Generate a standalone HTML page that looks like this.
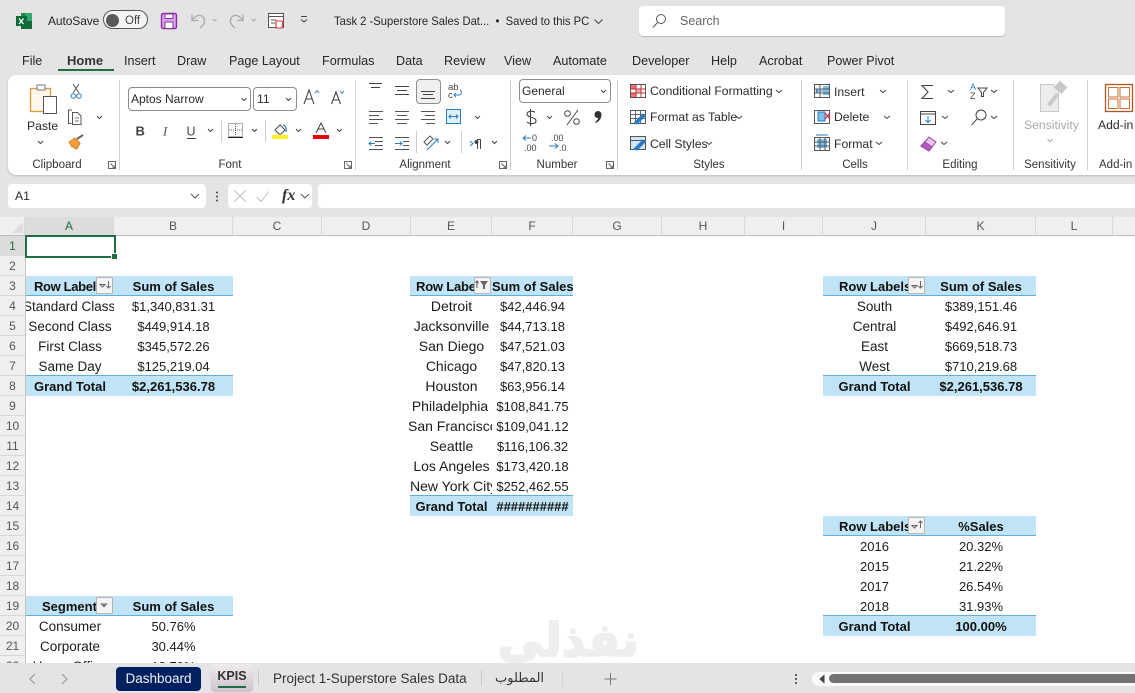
<!DOCTYPE html>
<html><head><meta charset="utf-8"><style>
html,body{margin:0;padding:0}
#p{position:relative;width:1135px;height:693px;overflow:hidden;background:#fff;font-family:"Liberation Sans",sans-serif;color:#222}
#p div,#p span.a{position:absolute;white-space:nowrap}
.bg{background:#e4e4e4}
.tt{font-size:12.6px;line-height:16px;color:#262626}
.rb{font-size:12.2px;line-height:16px;color:#2b2b2b}
.gl{font-size:11.5px;line-height:14px;color:#333;text-align:center;top:158px}
.sep{width:1px;top:80px;height:90px;background:#d0d0d0}
.ch{top:217px;height:18px;line-height:18px;font-size:12px;color:#555;text-align:center;background:#efefef;border-right:1px solid #d8d8d8;border-bottom:1px solid #bdbdbd}
.rh{left:0;width:25px;height:19px;line-height:21px;font-size:12px;color:#555;text-align:center;background:#efefef;border-bottom:1px solid #d8d8d8}
.cell{height:20px;line-height:21px;font-size:13px;text-align:center;overflow:hidden;color:#1c1c1c}
.l{font-size:13.5px}
.e{font-size:14px}
.b{font-weight:bold;color:#111}
.band{background:#c0e4f5}
.bt{background:#5eb1dc;height:1px}
.A{left:26px;width:88px}.B{left:114px;width:119px}
.E{left:411px;width:81px}.F{left:492px;width:81px}
.J{left:823px;width:103px}.K{left:926px;width:110px}
.btn{width:15px;height:15px;background:#f4f4f4;border:1px solid #b5b5b5;border-radius:1px}
</style></head><body><div id="p">

<div class="bg" style="left:0;top:0;width:1135px;height:217px"></div>
<div style="left:8px;top:75px;width:1135px;height:100px;background:#fff;border-radius:8px;box-shadow:0 1px 2px rgba(0,0,0,.18)"></div>

<!-- Title bar -->
<div class="tt" style="left:48px;top:13px;font-size:12px;letter-spacing:-.1px">AutoSave</div>
<div style="left:103px;top:10px;width:43px;height:17px;border:1px solid #555;border-radius:10px;background:#f4f4f4"></div>
<div style="left:106px;top:14px;width:13px;height:13px;border-radius:7px;background:#595959"></div>
<div class="tt" style="left:125px;top:13px;font-size:11.5px;color:#444">Off</div>
<div class="tt" style="left:334px;top:13px;font-size:12px;transform:scaleX(.935);transform-origin:0 50%">Task 2 -Superstore Sales Dat...&nbsp; •&nbsp; Saved to this PC</div>
<div style="left:639px;top:6px;width:366px;height:30px;background:#fff;border-radius:4px;box-shadow:0 1px 1px rgba(0,0,0,.2)"></div>
<div class="tt" style="left:680px;top:13px;color:#666;font-size:12.5px">Search</div>

<!-- Tabs -->
<div class="tt" style="left:22px;top:53px">File</div>
<div class="tt" style="left:67px;top:53px;font-weight:bold;font-size:13px;color:#333">Home</div>
<div style="left:58px;top:69px;width:56px;height:2px;background:#1f6e43"></div>
<div class="tt" style="left:124px;top:53px">Insert</div>
<div class="tt" style="left:177px;top:53px">Draw</div>
<div class="tt" style="left:229px;top:53px">Page Layout</div>
<div class="tt" style="left:322px;top:53px">Formulas</div>
<div class="tt" style="left:396px;top:53px">Data</div>
<div class="tt" style="left:444px;top:53px">Review</div>
<div class="tt" style="left:504px;top:53px">View</div>
<div class="tt" style="left:553px;top:53px">Automate</div>
<div class="tt" style="left:632px;top:53px">Developer</div>
<div class="tt" style="left:711px;top:53px">Help</div>
<div class="tt" style="left:759px;top:53px">Acrobat</div>
<div class="tt" style="left:827px;top:53px">Power Pivot</div>

<!-- Ribbon separators -->
<div class="sep" style="left:119px"></div><div class="sep" style="left:355px"></div>
<div class="sep" style="left:510px"></div><div class="sep" style="left:617px"></div>
<div class="sep" style="left:801px"></div><div class="sep" style="left:907px"></div>
<div class="sep" style="left:1013px"></div><div class="sep" style="left:1087px"></div>

<!-- Ribbon controls -->
<div class="rb" style="left:27px;top:118px">Paste</div>
<div style="left:128px;top:87px;width:121px;height:22px;border:1px solid #8d8d8d;border-radius:4px"></div>
<div class="rb" style="left:131px;top:91px;font-size:12px">Aptos Narrow</div>
<div style="left:253px;top:87px;width:42px;height:22px;border:1px solid #8d8d8d;border-radius:4px"></div>
<div class="rb" style="left:257px;top:91px">11</div>
<div style="left:416px;top:79px;width:23px;height:23px;background:#f0f0f0;border:1px solid #8d8d8d;border-radius:4px"></div>
<div style="left:519px;top:79px;width:90px;height:22px;border:1px solid #8d8d8d;border-radius:4px"></div>
<div class="rb" style="left:522px;top:83px;font-size:12px">General</div>
<div class="rb" style="left:650px;top:83px">Conditional Formatting</div>
<div class="rb" style="left:650px;top:109px">Format as Table</div>
<div class="rb" style="left:650px;top:136px">Cell Styles</div>
<div class="rb" style="left:834px;top:84px">Insert</div>
<div class="rb" style="left:834px;top:109px">Delete</div>
<div class="rb" style="left:834px;top:136px">Format</div>
<div class="rb" style="left:1024px;top:117px;color:#a9a9a9">Sensitivity</div>
<div class="rb" style="left:1098px;top:117px">Add-in</div>

<div class="gl" style="left:17px;width:80px">Clipboard</div>
<div class="gl" style="left:190px;width:80px">Font</div>
<div class="gl" style="left:385px;width:80px">Alignment</div>
<div class="gl" style="left:517px;width:80px">Number</div>
<div class="gl" style="left:669px;width:80px">Styles</div>
<div class="gl" style="left:815px;width:80px">Cells</div>
<div class="gl" style="left:920px;width:80px">Editing</div>
<div class="gl" style="left:1010px;width:80px">Sensitivity</div>
<div class="gl" style="left:1099px;width:36px;text-align:left">Add-in</div>

<!-- Formula bar -->
<div style="left:8px;top:184px;width:198px;height:24px;background:#fff;border-radius:4px"></div>
<div class="rb" style="left:15px;top:188px">A1</div>
<div style="left:228px;top:184px;width:84px;height:24px;background:#fff;border-radius:4px"></div>
<div style="left:318px;top:184px;width:830px;height:24px;background:#fff;border-radius:4px"></div>
<div style="left:282px;top:186px;font:italic bold 16px/20px 'Liberation Serif',serif;color:#333">fx</div>

<!-- Column headers -->
<div class="ch" style="left:0;width:24px"></div>
<div class="ch" style="left:25px;width:88px;background:#dcdcdc;color:#1f6e43;border-bottom:1px solid #1f6e43">A</div>
<div class="ch" style="left:114px;width:118px">B</div>
<div class="ch" style="left:233px;width:88px">C</div>
<div class="ch" style="left:322px;width:88px">D</div>
<div class="ch" style="left:411px;width:80px">E</div>
<div class="ch" style="left:492px;width:80px">F</div>
<div class="ch" style="left:573px;width:88px">G</div>
<div class="ch" style="left:662px;width:82px">H</div>
<div class="ch" style="left:745px;width:77px">I</div>
<div class="ch" style="left:823px;width:102px">J</div>
<div class="ch" style="left:926px;width:109px">K</div>
<div class="ch" style="left:1036px;width:76px">L</div>
<div class="ch" style="left:1113px;width:22px"></div>

<!-- Row headers -->
<div class="rh" style="top:236px;background:#dcdcdc;color:#1f6e43">1</div>
<div class="rh" style="top:256px">2</div><div class="rh" style="top:276px">3</div>
<div class="rh" style="top:296px">4</div><div class="rh" style="top:316px">5</div>
<div class="rh" style="top:336px">6</div><div class="rh" style="top:356px">7</div>
<div class="rh" style="top:376px">8</div><div class="rh" style="top:396px">9</div>
<div class="rh" style="top:416px">10</div><div class="rh" style="top:436px">11</div>
<div class="rh" style="top:456px">12</div><div class="rh" style="top:476px">13</div>
<div class="rh" style="top:496px">14</div><div class="rh" style="top:516px">15</div>
<div class="rh" style="top:536px">16</div><div class="rh" style="top:556px">17</div>
<div class="rh" style="top:576px">18</div><div class="rh" style="top:596px">19</div>
<div class="rh" style="top:616px">20</div><div class="rh" style="top:636px">21</div>
<div class="rh" style="top:656px">22</div>
<div style="left:25px;top:236px;width:1px;height:430px;background:#c4c4c4"></div>

<!-- Selection -->
<div style="left:25px;top:235px;width:87px;height:19px;border:2px solid #1f6e43"></div>
<div style="left:111px;top:253px;width:5px;height:5px;background:#1f6e43;border:1px solid #fff"></div>

<!-- Watermark -->
<div style="left:498px;top:612px;font:bold 46px/56px 'DejaVu Sans',sans-serif;color:#eeeeee;-webkit-text-stroke:2px #eeeeee">نفذلي</div>

<!-- Pivot 1 -->
<div class="band" style="left:26px;top:276px;width:207px;height:20px"></div>
<div class="bt" style="left:26px;top:295px;width:207px"></div>
<div class="cell b A" style="top:276px;text-align:left;padding-left:8px;width:70px;letter-spacing:-.35px">Row Labels</div>
<div class="cell b B" style="top:276px">Sum of Sales</div>
<div class="btn" style="left:96px;top:277px"></div>
<div class="cell l A" style="top:296px;text-align:left;text-indent:-3px">Standard Class</div><div class="cell B" style="top:296px">$1,340,831.31</div>
<div class="cell l A" style="top:316px">Second Class</div><div class="cell B" style="top:316px">$449,914.18</div>
<div class="cell l A" style="top:336px">First Class</div><div class="cell B" style="top:336px">$345,572.26</div>
<div class="cell l A" style="top:356px">Same Day</div><div class="cell B" style="top:356px">$125,219.04</div>
<div class="band" style="left:26px;top:376px;width:207px;height:20px"></div>
<div class="bt" style="left:26px;top:375px;width:207px"></div>
<div class="cell b A" style="top:376px">Grand Total</div><div class="cell b B" style="top:376px">$2,261,536.78</div>

<!-- Pivot 2 -->
<div class="band" style="left:410px;top:276px;width:163px;height:20px"></div>
<div class="bt" style="left:410px;top:295px;width:163px"></div>
<div class="cell b" style="left:416px;top:276px;width:60px;text-align:left;letter-spacing:-.2px">Row Labels</div>
<div class="btn" style="left:474px;top:277px"></div>
<div class="cell b F" style="top:276px">Sum of Sales</div>
<div class="cell e E" style="top:296px">Detroit</div><div class="cell F" style="top:296px">$42,446.94</div>
<div class="cell e E" style="top:316px">Jacksonville</div><div class="cell F" style="top:316px">$44,713.18</div>
<div class="cell e E" style="top:336px">San Diego</div><div class="cell F" style="top:336px">$47,521.03</div>
<div class="cell e E" style="top:356px">Chicago</div><div class="cell F" style="top:356px">$47,820.13</div>
<div class="cell e E" style="top:376px">Houston</div><div class="cell F" style="top:376px">$63,956.14</div>
<div class="cell e E" style="top:396px;left:408px;width:84px;text-align:center;text-indent:0">Philadelphia</div><div class="cell F" style="top:396px">$108,841.75</div>
<div class="cell e" style="left:408px;top:416px;width:84px;text-align:left">San Francisco</div><div class="cell F" style="top:416px">$109,041.12</div>
<div class="cell e E" style="top:436px">Seattle</div><div class="cell F" style="top:436px">$116,106.32</div>
<div class="cell e E" style="top:456px">Los Angeles</div><div class="cell F" style="top:456px">$173,420.18</div>
<div class="cell e" style="left:410px;top:476px;width:82px;text-align:left">New York City</div><div class="cell F" style="top:476px">$252,462.55</div>
<div class="band" style="left:410px;top:496px;width:163px;height:20px"></div>
<div class="bt" style="left:410px;top:495px;width:163px"></div>
<div class="cell b E" style="top:496px">Grand Total</div><div class="cell b F" style="top:496px">##########</div>

<!-- Pivot 3 -->
<div class="band" style="left:823px;top:276px;width:213px;height:20px"></div>
<div class="bt" style="left:823px;top:295px;width:213px"></div>
<div class="cell b" style="left:839px;top:276px;width:72px;text-align:left">Row Labels</div>
<div class="btn" style="left:908px;top:277px"></div>
<div class="cell b K" style="top:276px">Sum of Sales</div>
<div class="cell l J" style="top:296px">South</div><div class="cell K" style="top:296px">$389,151.46</div>
<div class="cell l J" style="top:316px">Central</div><div class="cell K" style="top:316px">$492,646.91</div>
<div class="cell l J" style="top:336px">East</div><div class="cell K" style="top:336px">$669,518.73</div>
<div class="cell l J" style="top:356px">West</div><div class="cell K" style="top:356px">$710,219.68</div>
<div class="band" style="left:823px;top:376px;width:213px;height:20px"></div>
<div class="bt" style="left:823px;top:375px;width:213px"></div>
<div class="cell b J" style="top:376px">Grand Total</div><div class="cell b K" style="top:376px">$2,261,536.78</div>

<!-- Pivot 4 -->
<div class="band" style="left:823px;top:516px;width:213px;height:20px"></div>
<div class="bt" style="left:823px;top:535px;width:213px"></div>
<div class="cell b" style="left:839px;top:516px;width:72px;text-align:left">Row Labels</div>
<div class="btn" style="left:908px;top:517px"></div>
<div class="cell b K" style="top:516px">%Sales</div>
<div class="cell J" style="top:536px">2016</div><div class="cell K" style="top:536px">20.32%</div>
<div class="cell J" style="top:556px">2015</div><div class="cell K" style="top:556px">21.22%</div>
<div class="cell J" style="top:576px">2017</div><div class="cell K" style="top:576px">26.54%</div>
<div class="cell J" style="top:596px">2018</div><div class="cell K" style="top:596px">31.93%</div>
<div class="band" style="left:823px;top:616px;width:213px;height:20px"></div>
<div class="bt" style="left:823px;top:615px;width:213px"></div>
<div class="cell b J" style="top:616px">Grand Total</div><div class="cell b K" style="top:616px">100.00%</div>

<!-- Pivot 5 -->
<div class="band" style="left:26px;top:596px;width:207px;height:20px"></div>
<div class="bt" style="left:26px;top:615px;width:207px"></div>
<div class="cell b" style="left:42px;top:596px;width:55px;text-align:left">Segment</div>
<div class="btn" style="left:96px;top:597px"></div>
<div class="cell b B" style="top:596px">Sum of Sales</div>
<div class="cell l A" style="top:616px">Consumer</div><div class="cell B" style="top:616px">50.76%</div>
<div class="cell l A" style="top:636px">Corporate</div><div class="cell B" style="top:636px">30.44%</div>
<div class="cell l A" style="top:656px">Home Office</div><div class="cell B" style="top:656px">18.79%</div>

<!-- Sheet tabs -->
<div style="left:0;top:663px;width:1135px;height:30px;background:#e4e4e6"></div>
<div style="left:116px;top:667px;width:85px;height:24px;background:#002060;border-radius:4px;color:#f2f2f2;font-size:13.5px;line-height:24px;text-align:center">Dashboard</div>
<div style="left:211px;top:664px;width:42px;height:27px;background:linear-gradient(#efecef,#cdc6cd);border-radius:4px;box-shadow:0 1px 1px rgba(0,0,0,.15);font-size:12.5px;font-weight:bold;line-height:25px;text-align:center;color:#333">KPIS</div>
<div style="left:218px;top:686px;width:28px;height:2px;background:#1f6e43"></div>
<div style="left:273px;top:671px;font-size:13.5px;line-height:16px;color:#333">Project 1-Superstore Sales Data</div>
<div style="left:258px;top:670px;width:1px;height:16px;background:#c9c9c9"></div>
<div style="left:481px;top:670px;width:1px;height:16px;background:#c9c9c9"></div>
<div style="left:562px;top:670px;width:1px;height:16px;background:#d2d2d2"></div>
<div style="left:495px;top:670px;font:13px/18px 'DejaVu Sans',sans-serif;color:#333">المطلوب</div>
<div style="left:812px;top:672px;width:330px;height:14px;background:#fafafa;border-radius:7px"></div>
<div style="left:829px;top:674px;width:310px;height:9px;background:#737373;border-radius:5px"></div>

<!-- Icons -->
<svg style="position:absolute;left:0;top:0" width="1135" height="693" viewBox="0 0 1135 693" fill="none" stroke="#444" stroke-width="1">
<!-- excel -->
<rect x="21" y="13" width="11" height="16" fill="#1d8a50" stroke="none"/><rect x="26" y="13" width="6" height="8" fill="#33a86c" stroke="none"/><rect x="21" y="21" width="11" height="8" fill="#136c3b" stroke="none"/>
<rect x="16" y="16" width="11" height="10" fill="#0f6a3a" stroke="none"/><path d="M19 18.500l4.500 5.500M23.500 18.500l-4.500 5.500" stroke="#fff" stroke-width="1.300"/>
<!-- save -->
<rect x="161.500" y="13.500" width="15" height="15" rx="1.500" fill="#d9a5e6" stroke="#8b2fa5" stroke-width="1.400"/><rect x="165" y="14" width="8" height="4.500" fill="#fff" stroke="#8b2fa5"/><rect x="165" y="22" width="8" height="6.500" fill="#fff" stroke="#8b2fa5"/>
<!-- undo/redo -->
<path d="M192 14.500v6h6M192.500 20c2-3 5-5 8-4.500 4 .8 5 6 3 9-1 1.300-2 2-3.500 3.500" stroke="#a8a8a8" stroke-width="1.300"/>
<path d="M243 14.500v6h-6M242.500 20c-2-3-5-5-8-4.500-4 .8-5 6-3 9 1 1.300 2 2 3.500 3.500" stroke="#a8a8a8" stroke-width="1.300"/>
<path d="M212.500 19l2 2 2-2M251.500 19l2 2 2-2" stroke="#aaa"/>
<!-- print preview -->
<rect x="268.500" y="13.500" width="15" height="14" stroke="#555" fill="#fff"/><path d="M268.500 16.500h15M271 20h5M271 23h4" stroke="#555"/><path d="M276 21h7l-1 7h-6z" fill="#fff" stroke="#d33" stroke-width="1.100"/>
<path d="M301 19.500l3 2.500 3-2.500M301 16.500h6" stroke="#444"/>
<!-- title chevron / search -->
<path d="M594.500 19.500l4 4 4-4" stroke="#444"/>
<circle cx="661" cy="19" r="4.500" stroke="#555"/><path d="M657.500 22.500l-4.500 5" stroke="#555"/>
<!-- paste -->
<rect x="30.500" y="88.500" width="20" height="23" fill="#fff7ea" stroke="#e09a38" stroke-width="1.300"/>
<rect x="37" y="85" width="8" height="5" fill="#fff" stroke="#777"/>
<rect x="43.500" y="96.500" width="13" height="17" fill="#fff" stroke="#555"/>
<path d="M38 141l2.500 2.500 2.500-2.500" stroke="#444"/>
<!-- scissors -->
<path d="M73 84l6 9M79 84l-6 9" stroke="#555"/><circle cx="73.500" cy="96" r="2.300" stroke="#2b7cc2"/><circle cx="79" cy="96" r="2.300" stroke="#2b7cc2"/>
<!-- copy -->
<path d="M72 110h-3.500v13.500h3M72.500 112.500h5l3.500 3.500v8.500h-8.500z" stroke="#555" fill="#fff"/><path d="M75 118h4M75 121h4" stroke="#777"/>
<path d="M97 116l2.500 2.500 2.500-2.500" stroke="#444"/>
<!-- brush -->
<path d="M69 142l6-4 5 5-3 6-3-1-1-2-1 1z" fill="#f0a040" stroke="#d97f20"/><path d="M77 139l6-4" stroke="#666" stroke-width="2"/>
<!-- font chev -->
<path d="M241.500 98l2.500 2.500 2.500-2.500M286 98l2.500 2.500 2.500-2.500" stroke="#444"/>
<!-- grow/shrink -->
<path d="M304 104l5-14 5 14M306 99h6" stroke="#444" stroke-width="1.100"/><path d="M315 93l2-2.500 2 2.500" stroke="#2b7cc2"/>
<path d="M331.500 104l4.500-12 4.500 12M333.500 100h5" stroke="#444" stroke-width="1.100"/><path d="M340 91l2 2.500 2-2.500" stroke="#2b7cc2"/>
<!-- launchers -->
<path d="M108.500 161.500h7v7h-7z M110.500 163.500l4 4M115 165v3h-3" stroke="#666"/>
<path d="M344.500 161.500h7v7h-7z M346.500 163.500l4 4M351 165v3h-3" stroke="#666"/>
<path d="M499.500 161.500h7v7h-7z M501.500 163.500l4 4M506 165v3h-3" stroke="#666"/>
<path d="M606.500 161.500h7v7h-7z M608.500 163.500l4 4M613 165v3h-3" stroke="#666"/>
<!-- B I U -->
<text x="135.500" y="135.500" font-size="13" font-weight="bold" fill="#444" stroke="none" font-family="Liberation Sans">B</text>
<text x="163" y="135.500" font-size="13" font-style="italic" fill="#555" stroke="none" font-family="Liberation Serif">I</text>
<text x="186.500" y="135.500" font-size="12.500" fill="#444" stroke="none" font-family="Liberation Sans">U</text><path d="M187 138.500h9" stroke="#444"/>
<path d="M208 129l2.500 2.500 2.500-2.500M252 129l2.500 2.500 2.500-2.500M296 129l2.500 2.500 2.500-2.500M337 129l2.500 2.500 2.500-2.500" stroke="#444"/>
<path d="M221.500 120v22M265.500 120v22" stroke="#ccc"/>
<rect x="228.500" y="123.500" width="14" height="13" stroke="#666" stroke-dasharray="1 1"/><path d="M235.500 124v12M229 130h13" stroke="#666" stroke-dasharray="1 1"/><path d="M228 137.500h15" stroke="#222"/>
<path d="M275 130l5-5 5 5-4 4h-2z" stroke="#444" fill="#fff"/><path d="M283 125c2 0 4 3 3 7" stroke="#2b7cc2" stroke-width="1.200"/><rect x="272" y="135" width="16" height="4" fill="#ffee22" stroke="none"/>
<path d="M316 133l5-10 5 10M318 129h6" stroke="#444"/><rect x="313" y="135" width="16" height="4" fill="#e8000f" stroke="none"/>
<!-- alignment -->
<path d="M369 83.500h13M371 87.500h9M395 86.500h14M397 90.500h10M395 94.500h14M421 91.500h14M423 94.500h10M421 98.500h14" stroke="#444"/>
<path d="M369 111.500h14M369 115.500h10M369 119.500h14M369 123.500h9M395 111.500h14M397 115.500h10M395 119.500h14M397 123.500h10M421 111.500h14M425 115.500h10M421 119.500h14M426 123.500h9" stroke="#555"/>
<rect x="446.500" y="109.500" width="14" height="14" stroke="#2b7cc2" fill="#dff0fb"/><path d="M449 116.500h9M451 114.500l-2 2 2 2M456 114.500l2 2-2 2" stroke="#2b7cc2"/>
<path d="M475 116l2.500 2.500 2.500-2.500" stroke="#444"/>
<path d="M369 137.500h14M375 141.500h8M375 145.500h8M369 149.500h14M395 137.500h14M403 141.500h6M403 145.500h6M395 149.500h14" stroke="#555"/>
<path d="M369 143.500h6M371 141.500l-2 2 2 2M395 143.500h7M400 141.500l2 2-2 2" stroke="#2b7cc2"/>
<path d="M416.500 131v22M461.500 131v22" stroke="#ccc"/>
<path d="M427 150l11-11M434 139h4v4" stroke="#2b7cc2"/><path d="M424 142l6-6 3 3-6 6z" stroke="#555"/>
<path d="M445 141l2.500 2.500 2.500-2.500M492 141l2.500 2.500 2.500-2.500" stroke="#444"/>
<path d="M470 141l3 2.500-3 2.500" stroke="#2b7cc2"/><path d="M477 139.500h4M477.500 140v9M480.500 140v9" stroke="#444"/><circle cx="476.500" cy="142" r="2" fill="#444" stroke="none"/>
<text x="448" y="90" font-size="9.500" fill="#444" stroke="none" font-family="Liberation Sans">ab</text><text x="448" y="98" font-size="9.500" fill="#444" stroke="none" font-family="Liberation Sans">c</text>
<path d="M454 95h5c3 0 3-4 1-5M454 95l2-2M454 95l2 2" stroke="#2b7cc2"/>
<path d="M601 90l2.500 2.500 2.500-2.500" stroke="#444"/>
<!-- number -->
<path d="M530.500 109v17M535 112.500c-1-1.500-8-2-8 1.500 0 4 9 2.500 9 7 0 3.500-7 3-9 1" stroke="#444" stroke-width="1.100"/>
<path d="M547 116l2.500 2.500 2.500-2.500" stroke="#444"/>
<circle cx="567.500" cy="113.500" r="2.800" stroke="#444"/><circle cx="576.500" cy="121.500" r="2.800" stroke="#444"/><path d="M578 110l-11 15" stroke="#444"/>
<path d="M594.500 114.500a3.500 3.500 0 1 1 7 0c0 4-2.500 7-5.500 8.500l-.8-1c1.800-1.200 2.800-2.500 3-4.200-2 .6-3.700-1-3.700-3.300z" fill="#333" stroke="none"/>
<path d="M523 138h8M526 135.500l-3 2.500 3 2.500M549 146h9M555 143.500l3 2.500-3 2.500" stroke="#2b7cc2"/>
<text x="532" y="141" font-size="9" fill="#444" stroke="none" font-family="Liberation Sans">0</text><text x="524" y="151" font-size="9" fill="#444" stroke="none" font-family="Liberation Sans">.00</text>
<text x="551" y="141" font-size="9" fill="#444" stroke="none" font-family="Liberation Sans">.00</text><text x="559" y="151" font-size="9" fill="#444" stroke="none" font-family="Liberation Sans">.0</text>
<!-- styles -->
<rect x="630.500" y="84.500" width="15" height="13" stroke="#555"/><rect x="631" y="85" width="5" height="4" fill="#f27070" stroke="none"/><rect x="631" y="93" width="5" height="4" fill="#f27070" stroke="none"/><rect x="636" y="89" width="5" height="4" fill="#f7b0b0" stroke="none"/><path d="M630.500 89h15M630.500 93h15M636 84.500v13M641 84.500v13" stroke="#b33"/>
<rect x="630.500" y="110.500" width="15" height="13" stroke="#555"/><path d="M630.500 114.500h15M635.500 110.500v13M630.500 118.500h15M640.500 110.500v13" stroke="#666"/><path d="M634 123l9-9 2 2-8 8z" fill="#2b7cc2" stroke="#2b7cc2"/>
<rect x="630.500" y="136.500" width="15" height="13" stroke="#555" fill="#cfe6f7"/><path d="M630.500 140.500h15" stroke="#555"/><path d="M634 149l9-9 2 2-8 8z" fill="#2b7cc2" stroke="#2b7cc2"/>
<path d="M776 90l3 2.500 3-2.500M736 116l3 2.500 3-2.500M706 142l3 2.500 3-2.500" stroke="#444"/>
<!-- cells -->
<rect x="814.500" y="84.500" width="15" height="13" stroke="#555"/><rect x="823" y="86" width="6" height="9" fill="#7cc0ee" stroke="none"/><path d="M814.500 89h15M814.500 93h15M820 84.500v13" stroke="#555"/><path d="M816 91h7M818 89l-2 2 2 2" stroke="#2b7cc2"/>
<path d="M880 90l3 2.500 3-2.500M884 116l3 2.500 3-2.500M876 142l3 2.500 3-2.500" stroke="#444"/>
<rect x="814.500" y="110.500" width="15" height="13" stroke="#555"/><rect x="818" y="112" width="7" height="9" fill="#7cc0ee" stroke="#2b7cc2"/><path d="M825 113l5 6M830 113l-5 6" stroke="#e23" stroke-width="1.200"/>
<rect x="814.500" y="137.500" width="15" height="13" stroke="#555"/><rect x="817" y="139" width="10" height="9" fill="#7cc0ee" stroke="none"/><path d="M814.500 142h15M814.500 146h15M820 137.500v13M825 137.500v13" stroke="#555"/><path d="M816 135h12" stroke="#2b7cc2"/>
<!-- editing -->
<path d="M933 85.500h-11l6 6.500-6 6.500h11" stroke="#444" stroke-width="1.100"/>
<path d="M948 90l3 2.500 3-2.500M991 90l3 2.500 3-2.500M942 116l3 2.500 3-2.500M991 116l3 2.500 3-2.500M941 142l3 2.500 3-2.500" stroke="#444"/>
<text x="970" y="90" font-size="9" fill="#2b7cc2" stroke="none" font-family="Liberation Sans">A</text><text x="970" y="99" font-size="9" fill="#444" stroke="none" font-family="Liberation Sans">Z</text>
<path d="M978 88h9l-3.500 4.500v4h-2v-4z" stroke="#444"/>
<rect x="920.500" y="111.500" width="15" height="13" stroke="#444"/><path d="M920.500 114h15" stroke="#444"/><path d="M928 116v6.500M925.500 120l2.500 2.500 2.500-2.500" stroke="#2b7cc2"/>
<circle cx="981" cy="115" r="5" stroke="#444"/><path d="M977 119l-5.500 6" stroke="#444"/>
<path d="M921 146l8-9 7 5-7 9z" fill="#e9c3ea" stroke="#9c3fa8"/><path d="M921 146l4-4 7 5-3 4z" fill="#b05cbf" stroke="#9c3fa8"/>
<!-- sensitivity -->
<path d="M1040.500 84.500h13l5 5v22h-18z" fill="#ececec" stroke="#c8c8c8"/><path d="M1047 104l9-11 3 2-9 12z" fill="#c8c8c8" stroke="none"/><rect x="1056" y="83" width="10" height="9" transform="rotate(40 1061 87)" fill="#c8c8c8" stroke="none"/>
<path d="M1047.500 139l2.500 2.500 2.500-2.500" stroke="#aaa"/>
<!-- add-in -->
<rect x="1105.500" y="84.500" width="27" height="27" stroke="#b3541e" stroke-width="1.300" fill="#fff"/><rect x="1108.500" y="87.500" width="9.500" height="9.500" stroke="#c8703a"/><rect x="1120" y="87.500" width="9.500" height="9.500" stroke="#c8703a"/><rect x="1108.500" y="99" width="9.500" height="9.500" stroke="#c8703a"/><rect x="1120" y="99" width="9.500" height="9.500" stroke="#c8703a"/>
<!-- formula bar -->
<path d="M191 194l4 4 4-4M301 194l4 4 4-4" stroke="#555"/>
<circle cx="217" cy="192.500" r="1" fill="#444" stroke="none"/><circle cx="217" cy="196.500" r="1" fill="#444" stroke="none"/><circle cx="217" cy="200.500" r="1" fill="#444" stroke="none"/>
<path d="M234.500 190.500l11 11M245.500 190.500l-11 11" stroke="#bbb"/><path d="M257 197l4 4.500 8-10" stroke="#bbb"/>
<path d="M12 233l11-11v11z" fill="#dcdcdc" stroke="none"/>
<!-- filter buttons -->
<path d="M100 284.500h5l-2.500 2.500zM108.500 281v7M106.500 286l2 2 2-2" stroke="#666"/>
<path d="M477 281v7M475.500 283l1.500-2 1.500 2" stroke="#555"/><path d="M480 281h8l-3 4v4h-2v-4z" fill="#666" stroke="none"/>
<path d="M912 285.500h5l-2.500 2.500zM920.500 281v7M918.500 286l2 2 2-2" stroke="#666"/>
<path d="M912 525.500h5l-2.500 2.500zM920.500 521v7M918.500 523l2-2 2 2" stroke="#666"/>
<path d="M100 603.500h8l-4 4z" fill="#777" stroke="none"/>
<!-- sheet bar -->
<path d="M35 674l-5 5 5 5M62 674l5 5-5 5" stroke="#9a9a9a" stroke-width="1.200"/>
<path d="M610.500 673v12M604.500 679h12" stroke="#777"/>
<circle cx="796" cy="675" r="1" fill="#333" stroke="none"/><circle cx="796" cy="679" r="1" fill="#333" stroke="none"/><circle cx="796" cy="683" r="1" fill="#333" stroke="none"/>
<path d="M824 675.500v7l-4-3.500z" fill="#444" stroke="#444"/>
</svg>
</div></body></html>
